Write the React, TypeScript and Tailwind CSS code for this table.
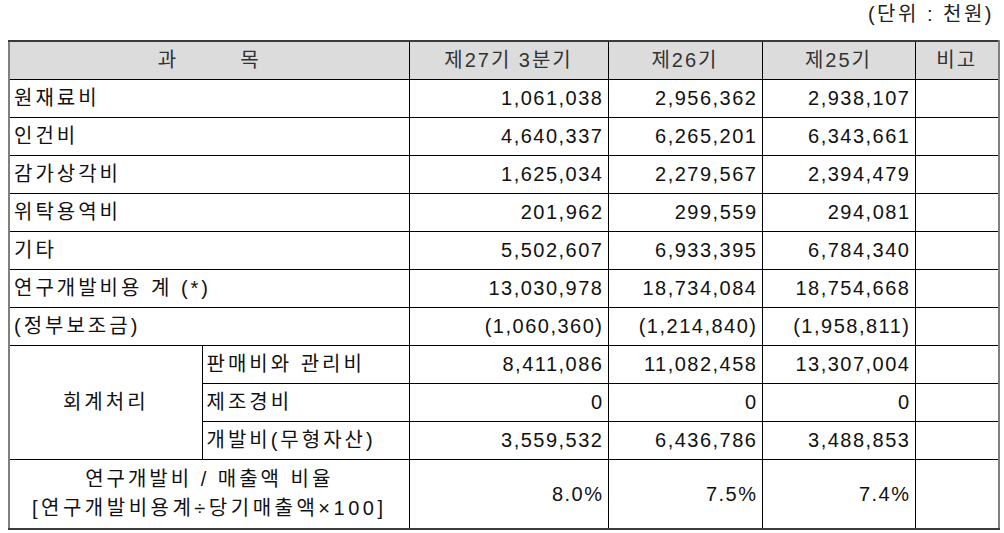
import React from "react";

const rows: [string, string, string, string][] = [
  ["원재료비", "1,061,038", "2,956,362", "2,938,107"],
  ["인건비", "4,640,337", "6,265,201", "6,343,661"],
  ["감가상각비", "1,625,034", "2,279,567", "2,394,479"],
  ["위탁용역비", "201,962", "299,559", "294,081"],
  ["기타", "5,502,607", "6,933,395", "6,784,340"],
  ["연구개발비용 계 (*)", "13,030,978", "18,734,084", "18,754,668"],
  ["(정부보조금)", "(1,060,360)", "(1,214,840)", "(1,958,811)"],
];

const sub: [string, string, string, string][] = [
  ["판매비와 관리비", "8,411,086", "11,082,458", "13,307,004"],
  ["제조경비", "0", "0", "0"],
  ["개발비(무형자산)", "3,559,532", "6,436,786", "3,488,853"],
];

const cell = "border border-black p-0";
const num = `${cell} text-right pr-[4px] tracking-[1.5px]`;
const label = `${cell} text-left pl-[4px] tracking-[3px]`;
const head = `${cell} font-normal text-center tracking-[2px]`;

export default function App() {
  return (
    <div
      className="w-[1004px] h-[533px] bg-white text-[#111] text-[20px] leading-none"
      style={{ fontFamily: '"Liberation Sans", "Noto Sans CJK KR", sans-serif' }}
    >
      <div className="h-[40px] flex justify-end items-start pt-[4px] pr-[10px] text-[#222] tracking-[2.5px]">
        (단위 : 천원)
      </div>
      <table className="ml-[8px] w-[990px] table-fixed border-collapse border-2 border-x-[#808080] border-y-[#3a3a3a]">
        <colgroup>
          <col className="w-[193px]" />
          <col className="w-[207px]" />
          <col className="w-[199px]" />
          <col className="w-[154px]" />
          <col className="w-[153px]" />
          <col className="w-[84px]" />
        </colgroup>
        <thead>
          <tr className="h-[38px] bg-[#dcdcdc] text-[#333]">
            <th colSpan={2} className={head}>
              <span className="inline-flex gap-[62px]">
                <span>과</span>
                <span>목</span>
              </span>
            </th>
            <th className={head}>제27기 3분기</th>
            <th className={head}>제26기</th>
            <th className={head}>제25기</th>
            <th className={head}>비고</th>
          </tr>
        </thead>
        <tbody>
          {rows.map((r) => (
            <tr key={r[0]} className="h-[38px]">
              <td colSpan={2} className={label}>
                {r[0]}
              </td>
              <td className={num}>{r[1]}</td>
              <td className={num}>{r[2]}</td>
              <td className={num}>{r[3]}</td>
              <td className={cell}></td>
            </tr>
          ))}
          {sub.map((r, i) => (
            <tr key={r[0]} className="h-[38px]">
              {i === 0 && (
                <td rowSpan={3} className={`${cell} text-center tracking-[3px]`}>
                  회계처리
                </td>
              )}
              <td className={label}>{r[0]}</td>
              <td className={num}>{r[1]}</td>
              <td className={num}>{r[2]}</td>
              <td className={num}>{r[3]}</td>
              <td className={cell}></td>
            </tr>
          ))}
          <tr className="h-[70px]">
            <td colSpan={2} className={`${cell} text-center`}>
              <div className="flex flex-col items-center gap-[9px]">
                <span className="tracking-[3px]">연구개발비 / 매출액 비율</span>
                <span className="tracking-[3.5px]">[연구개발비용계÷당기매출액×100]</span>
              </div>
            </td>
            <td className={num}>8.0%</td>
            <td className={num}>7.5%</td>
            <td className={num}>7.4%</td>
            <td className={cell}></td>
          </tr>
        </tbody>
      </table>
    </div>
  );
}
